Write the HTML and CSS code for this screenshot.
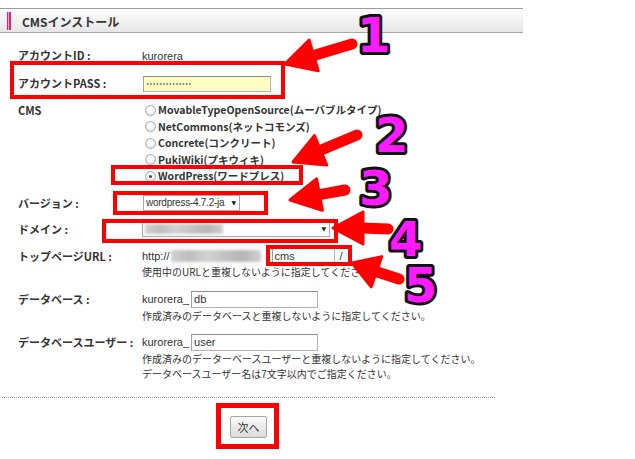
FILE: index.html
```html
<!DOCTYPE html>
<html lang="ja">
<head>
<meta charset="utf-8">
<title>CMSインストール</title>
<link rel="stylesheet" href="styles.css">
</head>
<body>
<div class="page">
  <div class="header"><span class="mark"></span><h1 class="title">CMSインストール</h1></div>
  <div class="form">
    <div class="row r-id">
      <div class="label">アカウントID :</div>
      <div class="value"><span class="plain">kurorera</span></div>
    </div>
    <div class="row r-pass">
      <div class="label">アカウントPASS :</div>
      <div class="value"><span class="input pass"><span class="dots">••••••••••••••</span></span></div>
    </div>
    <div class="row r-cms">
      <div class="label">CMS</div>
      <div class="value options">
        <div class="opt"><span class="radio"></span>MovableTypeOpenSource(ムーバブルタイプ)</div>
        <div class="opt"><span class="radio"></span>NetCommons(ネットコモンズ)</div>
        <div class="opt"><span class="radio"></span>Concrete(コンクリート)</div>
        <div class="opt"><span class="radio"></span>PukiWiki(プキウィキ)</div>
        <div class="opt"><span class="radio on"></span>WordPress(ワードプレス)</div>
      </div>
    </div>
    <div class="row r-ver">
      <div class="label">バージョン :</div>
      <div class="value"><div class="select ver"><span class="sel-text">wordpress-4.7.2-ja</span><span class="dn">▼</span></div></div>
    </div>
    <div class="row r-dom">
      <div class="label">ドメイン :</div>
      <div class="value"><div class="select dom"><span class="blur blur-dom"></span><span class="dn">▼</span></div></div>
    </div>
    <div class="row r-url">
      <div class="label">トップページURL :</div>
      <div class="value">
        <div class="line"><span class="plain">http://</span><span class="blur blur-url"></span><span class="input cms">cms</span><span class="plain slash">/</span></div>
        <div class="help">使用中のURLと重複しないように指定してください。</div>
      </div>
    </div>
    <div class="row r-db">
      <div class="label">データベース :</div>
      <div class="value">
        <div class="line"><span class="plain">kurorera_</span><span class="input field">db</span></div>
        <div class="help">作成済みのデータベースと重複しないように指定してください。</div>
      </div>
    </div>
    <div class="row r-user">
      <div class="label">データベースユーザー :</div>
      <div class="value">
        <div class="line"><span class="plain">kurorera_</span><span class="input field">user</span></div>
        <div class="help">作成済みのデーターベースユーザーと重複しないように指定してください。</div>
        <div class="help">データベースユーザー名は7文字以内でご指定ください。</div>
      </div>
    </div>
  </div>
  <div class="divider"></div>
  <div class="actions"><button class="btn">次へ</button></div>

  <div class="box b1"></div>
  <div class="box b2"></div>
  <div class="box b3"></div>
  <div class="box b4"></div>
  <div class="box b5"></div>
  <div class="box b6"></div>

  <svg class="overlay" width="635" height="459" viewBox="0 0 635 459">
    <g class="shafts">
      <line x1="352" y1="44" x2="313.7" y2="55.4"/>
      <line x1="357" y1="135" x2="320.6" y2="150.3"/>
      <line x1="345" y1="190" x2="319.5" y2="194.6"/>
      <line x1="388" y1="229" x2="362" y2="228"/>
      <line x1="399" y1="279" x2="376.5" y2="271.7"/>
    </g>
    <g class="heads">
      <polygon points="285,64 309.1,40.1 318.3,70.7"/>
      <polygon points="293,162 314.4,135.6 326.8,165"/>
      <polygon points="290,200 316.6,178.9 322.4,210.3"/>
      <polygon points="333,228 363,212 363,244"/>
      <polygon points="352,263 381.8,256.6 371.2,286.8"/>
    </g>
    <g class="nums">
      <text x="357" y="52">1</text>
      <text x="375" y="152">2</text>
      <text x="359" y="205">3</text>
      <text x="389" y="256">4</text>
      <text x="404" y="302">5</text>
    </g>
  </svg>
</div>
</body>
</html>
```
FILE: styles.css
```css
* { box-sizing: border-box; }
html, body { margin: 0; padding: 0; background: #fff; }
body {
  font-family: "Noto Sans CJK JP", "Noto Sans", sans-serif;
  font-size: 11px;
  color: #333;
}
.page { position: relative; width: 635px; height: 459px; overflow: hidden; }

.header {
  margin-top: 8px;
  width: 523px;
  height: 25px;
  border-top: 1px solid #9c9c9c;
  border-bottom: 1px solid #a9a9a9;
  background: linear-gradient(to bottom, #fdfdfd 0%, #f2f2f2 50%, #e6e6e6 100%);
  display: flex;
  align-items: center;
  padding: 2px 0 0 7px;
}
.mark {
  width: 4px;
  height: 18px;
  margin-top: -2px;
  background: linear-gradient(to right, #d8287a 0 1.5px, #f3a6ca 1.5px 2.5px, #d8287a 2.5px 4px);
}
.title { margin: 0 0 0 11px; font-size: 12px; font-weight: bold; color: #333; line-height: 16px; }

.form { padding: 14px 0 0 18px; }
.row { display: grid; grid-template-columns: 124px auto; }
.label { font-weight: bold; line-height: 16px; color: #333; white-space: nowrap; }
.value { line-height: 16px; }
.r-pass { margin-top: 11px; }
.r-cms { margin-top: 10px; }
.r-cms .label { line-height: 16.5px; }
.r-ver { margin-top: 10px; }
.r-dom { margin-top: 10px; }
.r-url { margin-top: 11px; }
.r-db { margin-top: 12px; }
.r-user { margin-top: 11px; }
.r-db .label, .r-user .label { line-height: 17px; }

.plain { font-family: "Liberation Sans", Arial, sans-serif; font-size: 11px; color: #333; }

.input {
  display: inline-block;
  height: 16px;
  border: 1px solid #b4b4b4;
  border-top-color: #8e8e8e;
  border-left-color: #a0a0a0;
  background: #fff;
  font-family: "Liberation Sans", Arial, sans-serif;
  font-size: 11px;
  line-height: 14px;
  padding-left: 2px;
  color: #333;
}
.pass { width: 128px; margin-left: 1px; background: #ffffc2; }
.dots { font-family: "DejaVu Sans", sans-serif; font-size: 5.5px; letter-spacing: 0; vertical-align: top; }

.options { display: flex; flex-direction: column; }
.opt { display: flex; align-items: center; height: 16.5px; padding-left: 3px; font-weight: bold; font-size: 10.5px; white-space: nowrap; }
.radio {
  position: relative;
  width: 11px;
  height: 11px;
  border-radius: 50%;
  border: 1px solid #ababab;
  background: radial-gradient(circle at 50% 40%, #ffffff 0 25%, #d8d8d8 100%);
  margin-right: 2px;
  flex: none;
}
.radio.on::after {
  content: "";
  position: absolute;
  left: 3px;
  top: 3px;
  width: 3px;
  height: 3px;
  border-radius: 50%;
  background: #444;
}

.select {
  display: flex;
  align-items: center;
  justify-content: space-between;
  height: 16px;
  border: 1px solid #a9a9a9;
  background: #fff;
  padding: 0 3px 0 2px;
  font-family: "Liberation Sans", Arial, sans-serif;
  font-size: 10px;
  color: #333;
  white-space: nowrap;
}
.sel-text { letter-spacing: -0.25px; }
.ver { width: 97px; margin-left: 1px; }
.dom { width: 188px; }
.dn { font-family: "DejaVu Sans", sans-serif; font-size: 6px; color: #222; margin-left: 3px; }

.blur {
  display: inline-block;
  background: linear-gradient(to right, #cfcfcf 0%, #bdbdbd 20%, #d2d2d2 40%, #c2c2c2 60%, #b5b5b5 80%, #d0d0d0 100%);
  filter: blur(1.4px);
}
.blur-dom { width: 78px; height: 10px; }

.line { display: flex; align-items: center; height: 16px; }
.blur-url { width: 90px; height: 12px; margin: 0 11px 0 1px; }
.cms { width: 63px; }
.slash { margin-left: 5px; }
.help { font-size: 10px; line-height: 15px; color: #333; white-space: nowrap; }

.r-db .line, .r-user .line { height: 17px; }
.field { width: 127px; height: 17px; margin-left: 2px; line-height: 15px; }

.divider { margin: 16px 0 0 2px; width: 493px; border-top: 1px dotted #a0a0a0; }
.actions { width: 497px; display: flex; justify-content: center; margin-top: 18px; }
.btn {
  width: 37px;
  height: 22px;
  padding: 0;
  border: 1px solid #a5a5a5;
  border-radius: 2px;
  background: linear-gradient(to bottom, #f9f9f9, #dddddd);
  font-family: "Noto Sans CJK JP", sans-serif;
  font-size: 11px;
  color: #333;
}

.box { position: absolute; border: 4px solid #ff0000; }
.b1 { left: 10px; top: 61px; width: 275px; height: 38px; }
.b2 { left: 111px; top: 165px; width: 192px; height: 20px; }
.b3 { left: 113px; top: 191px; width: 155px; height: 24px; }
.b4 { left: 102px; top: 219px; width: 236px; height: 24px; }
.b5 { left: 266px; top: 245px; width: 86px; height: 21px; }
.b6 { left: 216px; top: 403px; width: 63px; height: 46px; border-width: 5px; }

.overlay { position: absolute; left: 0; top: 0; }
.shafts line { stroke: #ff0000; stroke-width: 11; stroke-linecap: round; }
.heads polygon { fill: #ff0000; stroke: #ff0000; stroke-width: 3; stroke-linejoin: round; }
.nums text {
  font-family: "DejaVu Sans", sans-serif;
  font-weight: bold;
  font-size: 48px;
  fill: #ff1aff;
  stroke: #111;
  stroke-width: 6px;
  stroke-linejoin: round;
  paint-order: stroke fill;
}
```
